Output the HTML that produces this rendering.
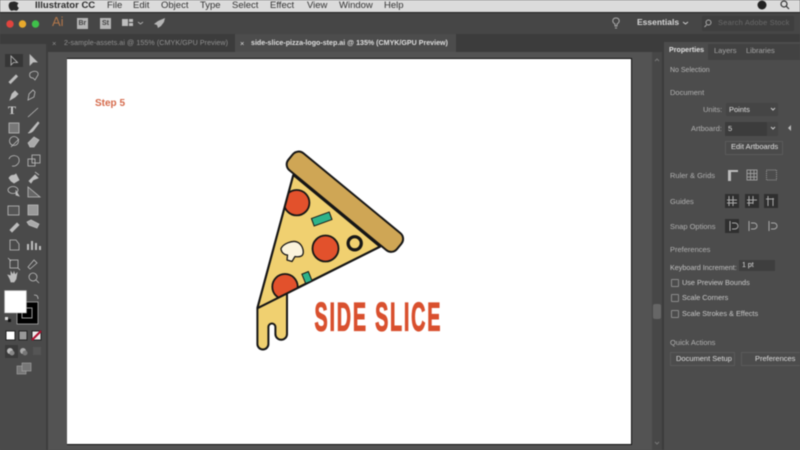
<!DOCTYPE html>
<html><head><meta charset="utf-8"><style>
html,body{margin:0;padding:0;background:#4d4d4d}
#r{position:relative;width:800px;height:450px;overflow:hidden;background:#4c4c4c;font-family:"Liberation Sans",sans-serif;filter:blur(.5px)}
.a{position:absolute}
.t{position:absolute;white-space:nowrap;line-height:1;color:#c9c9c9;font-size:7.5px}
.menu{position:absolute;top:0;font-size:9.5px;color:#333;line-height:11px;white-space:nowrap}
svg{position:absolute;left:0;top:0}
</style></head><body><div id="r">
<!-- menu -->
<div class="a" style="left:0;top:0;width:800px;height:12px;background:#dbdbdb;border-bottom:1px solid #222"></div>
<div class="menu" style="left:35px;font-weight:bold;color:#2c2c2c">Illustrator CC</div>
<div class="menu" style="left:107px">File</div><div class="menu" style="left:133px">Edit</div>
<div class="menu" style="left:161px">Object</div><div class="menu" style="left:200px">Type</div>
<div class="menu" style="left:232px">Select</div><div class="menu" style="left:270px">Effect</div>
<div class="menu" style="left:307px">View</div><div class="menu" style="left:339px">Window</div>
<div class="menu" style="left:384px">Help</div>
<!-- title bar -->
<div class="a" style="left:0;top:13px;width:800px;height:21px;background:#464646"></div>
<div class="a" style="left:0;top:34px;width:800px;height:18px;background:#3c3c3c"></div>
<div class="a" style="left:0;top:44px;width:46px;height:406px;background:#4a4a4a"></div>
<div class="a" style="left:46px;top:44px;width:2px;height:406px;background:#3d3d3d"></div>
<!-- canvas -->
<div class="a" style="left:48px;top:52px;width:604px;height:398px;background:#535353"></div>
<div class="a" style="left:67px;top:58px;width:564px;height:385px;background:#fff;border:1px solid #111;border-width:1px 1px 1px 0"></div>
<div class="a" style="left:652px;top:52px;width:10px;height:398px;background:#474747"></div>
<div class="a" style="left:653px;top:304px;width:8px;height:15px;background:#666;border-radius:2px"></div>
<div class="a" style="left:662px;top:42px;width:138px;height:408px;background:#4c4c4c;border-left:2px solid #3c3c3c"></div>
<div class="a" style="left:664px;top:44px;width:136px;height:16px;background:#424242"></div>
<div class="a" style="left:664px;top:44px;width:44px;height:17px;background:#4c4c4c"></div>
<!-- tabs -->
<div class="a" style="left:235px;top:34px;width:221px;height:18px;background:#4c4c4c"></div>
<div class="t" style="left:52px;top:40px;color:#8d8d8d">×</div>
<div class="t" style="left:64px;top:40px;color:#909090;font-size:7.1px;letter-spacing:.08px">2-sample-assets.ai @ 155% (CMYK/GPU Preview)</div>
<div class="t" style="left:240px;top:40px;color:#ddd">×</div>
<div class="t" style="left:251px;top:40px;color:#dedede;font-size:7.1px;font-weight:bold">side-slice-pizza-logo-step.ai @ 135% (CMYK/GPU Preview)</div>
<!-- top right -->
<div class="t" style="left:637px;top:18px;font-size:8.5px;font-weight:bold;color:#d6d6d6">Essentials</div>
<div class="a" style="left:702px;top:16px;width:92px;height:15px;background:#3f3f3f"></div>
<div class="t" style="left:718px;top:19px;font-size:7.5px;color:#6a6a6a;letter-spacing:.2px">Search Adobe Stock</div>
<!-- panel text -->
<div class="t" style="left:669px;top:47px;font-size:7.1px;font-weight:bold;color:#e0e0e0">Properties</div>
<div class="t" style="left:714px;top:47px;color:#a5a5a5;font-size:7.5px">Layers</div>
<div class="t" style="left:746px;top:47px;color:#a5a5a5;font-size:7.5px">Libraries</div>
<div class="t" style="left:670px;top:67px;color:#b5b5b5;font-size:7px">No Selection</div>
<div class="t" style="left:670px;top:89px;color:#b0b0b0">Document</div>
<div class="t" style="left:703px;top:106px;color:#b0b0b0">Units:</div>
<div class="a" style="left:726px;top:103px;width:52px;height:13px;background:#454545"></div>
<div class="t" style="left:729px;top:106px;color:#e0e0e0">Points</div>
<div class="t" style="left:691px;top:125px;color:#b0b0b0">Artboard:</div>
<div class="a" style="left:725px;top:122px;width:42px;height:14px;background:#3c3c3c"></div>
<div class="a" style="left:767px;top:122px;width:11px;height:14px;background:#454545"></div>
<div class="t" style="left:728px;top:125px;color:#ddd">5</div>
<div class="a" style="left:725px;top:141px;width:56px;height:12px;border:1px solid #5a5a5a;background:#4a4a4a"></div>
<div class="t" style="left:731px;top:143px;color:#e0e0e0;font-size:7.5px">Edit Artboards</div>
<div class="t" style="left:670px;top:172px;color:#b0b0b0">Ruler &amp; Grids</div>
<div class="t" style="left:670px;top:198px;color:#b0b0b0">Guides</div>
<div class="t" style="left:670px;top:223px;color:#b0b0b0">Snap Options</div>
<div class="t" style="left:670px;top:246px;color:#b0b0b0">Preferences</div>
<div class="t" style="left:670px;top:264px;color:#c0c0c0;font-size:7.2px">Keyboard Increment:</div>
<div class="a" style="left:739px;top:260px;width:36px;height:11px;background:#3e3e3e"></div>
<div class="t" style="left:742px;top:262px;color:#ddd;font-size:7px">1 pt</div>
<div class="a" style="left:671px;top:279px;width:6px;height:6px;border:1px solid #8a8a8a;border-radius:1px"></div>
<div class="t" style="left:682px;top:279px;color:#c8c8c8;font-size:7.3px">Use Preview Bounds</div>
<div class="a" style="left:671px;top:294px;width:6px;height:6px;border:1px solid #8a8a8a;border-radius:1px"></div>
<div class="t" style="left:682px;top:294px;color:#c8c8c8;font-size:7.3px">Scale Corners</div>
<div class="a" style="left:671px;top:310px;width:6px;height:6px;border:1px solid #8a8a8a;border-radius:1px"></div>
<div class="t" style="left:682px;top:310px;color:#c8c8c8;font-size:7.3px">Scale Strokes &amp; Effects</div>
<div class="t" style="left:670px;top:339px;color:#b0b0b0">Quick Actions</div>
<div class="a" style="left:670px;top:352px;width:63px;height:12px;border:1px solid #5a5a5a"></div>
<div class="t" style="left:676px;top:355px;color:#dedede;font-size:7.5px">Document Setup</div>
<div class="a" style="left:741px;top:352px;width:60px;height:12px;border:1px solid #5a5a5a"></div>
<div class="t" style="left:755px;top:355px;color:#dedede;font-size:7.5px">Preferences</div>
<!-- Br St text -->
<div class="a" style="left:77px;top:18px;width:11px;height:11px;background:#b5b5b5"></div>
<div class="a" style="left:100px;top:18px;width:11px;height:11px;background:#b5b5b5"></div>
<div class="t" style="left:78.500px;top:20px;font-size:7px;font-weight:bold;color:#444">Br</div>
<div class="t" style="left:102px;top:20px;font-size:7px;font-weight:bold;color:#444">St</div>
<div class="t" style="left:52px;top:15px;font-size:13px;color:#b0764a">Ai</div>
<div class="t" style="left:8px;top:104px;font-size:12px;font-family:'Liberation Serif',serif;font-weight:bold;color:#ccc">T</div>
<!-- graphics -->
<svg width="800" height="450" viewBox="0 0 800 450">
<defs><clipPath id="c"><path d="M293.300 175L380 246.700L257.300 308.300z"/></clipPath></defs>
<path d="M18 1.500c-1.800-1-3-.2-4-.2-2.200 0-3.500 2-3.300 4.300.2 2.200 1.700 4.700 3 4.700 .9 0 1.300-.5 2.300-.5s1.400 .5 2.300 .5c1 0 2-1.400 2.500-3-1.800-.9-2-3.300-.3-4.300-.6-.9-1.500-1.300-2.500-1.500z" fill="#2a2a2a" transform="translate(-2 .5)"/>
<circle cx="10" cy="24" r="3.700" fill="#e0443e"/><circle cx="22.500" cy="24" r="3.700" fill="#e8a92c"/><circle cx="35.500" cy="24" r="3.700" fill="#3fc04a"/>
<g fill="#bdbdbd"><rect x="122" y="19" width="6" height="7"/><rect x="129" y="19" width="4" height="3"/><rect x="129" y="23" width="4" height="3"/></g>
<path d="M138 22l2.500 2 2.500-2" stroke="#aaa" fill="none" stroke-width="1"/>
<path d="M165 18l-7 3-4 3 3 1 1 3 3-2 3-4z" fill="#b5b5b5"/>
<!-- right top icons -->
<circle cx="762" cy="5" r="4.500" fill="#222"/><circle cx="784" cy="4" r="3" fill="none" stroke="#333" stroke-width="1.200"/><path d="M786 6l3 3" stroke="#333" stroke-width="1.200"/>
<path d="M615 26v-2c-3.500-2-2.500-6 1-6s4.500 4 1 6v2z" fill="none" stroke="#aaa" stroke-width="1"/><path d="M615 28h2" stroke="#aaa"/>
<path d="M683 22l2.500 2 2.500-2" stroke="#ccc" fill="none"/>
<circle cx="708.500" cy="22.500" r="2.500" fill="none" stroke="#aaa"/><path d="M706.500 25l-2 2" stroke="#aaa"/>
<!-- tools -->
<rect x="5" y="54" width="18" height="13" fill="#363636"/>
<g fill="#bdbdbd" stroke="#bdbdbd" stroke-width=".8">
<path d="M11 56v9l2.500-2.500 4 0z" fill="none"/>
<path d="M30 55v10l3-3h4z"/>
<path d="M9 82l7-7 1.500 1.500-7 7z"/><path d="M30 73c4-3 9-2 8 2l-3 5-2-2c-3 0-4-2-3-5z" fill="none"/>
<path d="M10 100l2-6 3-3 3 3-3 3z"/><path d="M28 100l1-6 4-4 2 2-1 5z" fill="none"/>
<path d="M28 117l10-9" fill="none"/>
<rect x="9" y="123" width="10" height="10" fill="#777"/>
<path d="M28 133c2 0 2-3 3-3l7-8 1 1-6 8c-1 1-3 2-5 2z"/>
<circle cx="14" cy="141" r="4.500" fill="none"/><path d="M11 147l8-8"/>
<path d="M28 143l6-6 5 3-5 7-4 0z" fill="#aaa"/>
<path d="M9 159c2-5 9-4 10 0s-3 8-7 7" fill="none"/>
<rect x="28" y="159" width="7" height="7" fill="none"/><rect x="32" y="155" width="8" height="8" fill="none"/>
<path d="M9 178c3-5 5-1 7-4l3 6-5 3-3-2z"/><path d="M29 181l6-6 3 3-5 2-2 3zM35 172l4 3"/>
<ellipse cx="13" cy="190" rx="5" ry="3.500" fill="none"/><path d="M16 191l3 5-3-1z"/>
<path d="M28 187v10h12l-12-10z" fill="#666"/>
<rect x="8" y="206" width="11" height="9" fill="#555"/>
<rect x="28" y="205" width="10" height="10" fill="#999"/>
<path d="M10 230l7-7 2 2-7 7z"/>
<path d="M27 222l4-2 8 4-2 4-8-3z" fill="#aaa"/>
<path d="M10 240h6l3 4v6h-9z" fill="none"/>
<path d="M28 250v-6M32 250v-9M36 250v-7M40 250v-4" fill="none" stroke-width="2"/>
<rect x="10" y="260" width="8" height="8" fill="none"/><path d="M8 258l3 3M18 268l2 2" />
<path d="M28 267l6-7 3 3-7 6z" fill="none"/>
<path d="M10 279l-2-4 3 1 0-4 2 3 1-3 1 3 2-2-1 6-2 3h-3z"/>
<circle cx="33" cy="277" r="4" fill="none"/><path d="M36 280l3 3"/>
<path d="M34 295c3 0 4 1 4 4" fill="none"/>
</g>
<!-- fill stroke -->
<rect x="17" y="302" width="21" height="22" fill="#000" stroke="#aaa" stroke-width=".8"/>
<rect x="22" y="308" width="10" height="10" fill="none" stroke="#999"/>
<rect x="4.500" y="290.500" width="22" height="22.500" fill="#fff" stroke="#999" stroke-width=".5"/>
<rect x="5" y="317" width="3" height="3" fill="#ddd"/><rect x="8" y="319" width="3" height="3" fill="#111"/>
<rect x="6" y="331" width="9" height="9" fill="#fff" stroke="#222"/>
<rect x="19" y="331" width="8" height="9" fill="#999" stroke="#222"/>
<rect x="32" y="331" width="9" height="9" fill="#eee" stroke="#222"/><path d="M32 340l9-9" stroke="#b01030" stroke-width="2"/>
<rect x="5" y="345" width="13" height="13" fill="#3a3a3a"/><circle cx="10" cy="351" r="3" fill="#bbb"/><circle cx="12" cy="353" r="2.500" fill="#888"/>
<circle cx="23" cy="351" r="3" fill="#aaa"/><circle cx="25" cy="353" r="2.500" fill="#777"/>
<rect x="33" y="347" width="8" height="8" fill="#555"/>
<rect x="17" y="366" width="9" height="8" fill="#777" stroke="#aaa" stroke-width=".6"/><rect x="22" y="363" width="9" height="8" fill="#777" stroke="#aaa" stroke-width=".6"/>
<!-- panel icons -->
<path d="M728 170h10v2h-7v9h-3z" fill="#bbb"/>
<g fill="none" stroke="#999"><rect x="747" y="170" width="10" height="10"/><path d="M750.500 170v10M754 170v10M747 173.500h10M747 177h10"/><rect x="766.500" y="170" width="10" height="10" stroke-dasharray="1 1"/></g>
<rect x="725" y="194" width="14" height="14" fill="#2f2f2f"/><rect x="745" y="194" width="14" height="14" fill="#2f2f2f"/><rect x="764" y="194" width="14" height="14" fill="#2f2f2f"/>
<path d="M729 196v10M733 196v10M727 200h10M727 203h10M749 196v10M753 196v8M747 200h10M747 203h6M768 196v10M773 198v8M766 199h8" stroke="#aaa" fill="none"/>
<rect x="725" y="219" width="14" height="14" fill="#2f2f2f"/>
<path d="M730 221v10M732 223h3a2 2 0 0 1 0 6h-3M749 221v10M751 223h3a2 2 0 0 1 0 6h-3M769 221v10M771 223h3a2 2 0 0 1 0 6h-3" stroke="#aaa" fill="none"/>
<path d="M771 108l2 2 2-2M771 127l2 2 2-2" stroke="#ccc" fill="none"/>
<path d="M791 125v6l-3-3z" fill="#bbb"/>
<path d="M655 61l2-2 2 2M655 442l2 2 2-2" stroke="#777" fill="none"/>
<!-- pizza -->
<path d="M293.300 175L380 246.700L287 293V334a5.800 5.800 0 0 1-11.600 0V327a3.500 3.500 0 0 0-7 0V344a5.500 5.500 0 0 1-11 0V308.300z" fill="#f0d070" stroke="#161616" stroke-width="2" stroke-linejoin="round"/>
<g clip-path="url(#c)" stroke="#161616" stroke-width="1.800">
<circle cx="296.700" cy="202.700" r="12.700" fill="#e2512c"/>
<circle cx="285" cy="286.700" r="12.700" fill="#e2512c"/>
</g>
<path d="M257.300 308.300L380 246.700M293.300 175L257.300 308.300" stroke="#161616" stroke-width="2" fill="none"/>
<g stroke="#161616" stroke-width="1.800">
<circle cx="325.500" cy="248.500" r="13" fill="#e2512c"/>
<circle cx="354.700" cy="243.300" r="6.600" fill="none" stroke-width="3.200"/>
<rect x="-9.500" y="-4" width="19" height="8" transform="translate(321.700 219) rotate(-20)" fill="#2fb38a" stroke-width="1"/>
<rect x="-3.500" y="-5" width="7" height="10" transform="translate(307 277.500) rotate(-22)" fill="#2fb38a" stroke-width="1"/>
<path d="M281 248.500C283 244 292 240 297 242C302 244 304 250 303 254C302 257 298 257 295 256.500L292 261.500L287 260L287.500 255C284 255 281 252 281 248.500z" fill="#fbf4dc" stroke-linejoin="round" stroke-width="1.300"/>
</g>
<rect x="-70.300" y="-11" width="140.600" height="22" rx="7.500" transform="translate(344.900 201.700) rotate(39.500)" fill="#cfa655" stroke="#161616" stroke-width="2"/>
<text transform="translate(314.500 330.700) scale(.5 1)" font-family="'Liberation Sans',sans-serif" font-weight="bold" font-size="39.500" letter-spacing="3.600" fill="#d9502e" stroke="#d9502e" stroke-width="1.200">SIDE SLICE</text>
<text x="95" y="106" font-family="'Liberation Sans',sans-serif" font-weight="bold" font-size="10" fill="#d5694a">Step 5</text>
</svg>
</div></body></html>
